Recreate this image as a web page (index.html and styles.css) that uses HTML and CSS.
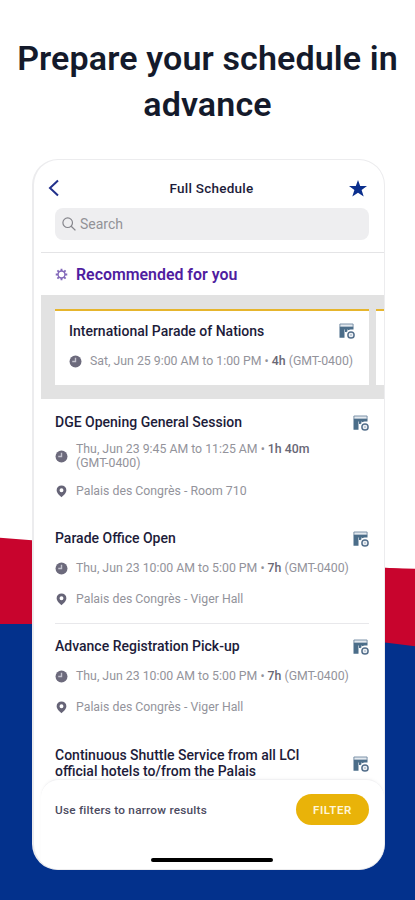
FILE: index.html
```html
<!DOCTYPE html>
<html lang="en">
<head>
<meta charset="utf-8">
<title>Full Schedule</title>
<link rel="stylesheet" href="styles.css">
</head>
<body>
<svg width="0" height="0" class="defs" aria-hidden="true">
  <symbol id="clock" viewBox="0 0 12 12"><circle cx="6" cy="6" r="5.500" fill="#6c6a7c"/><path d="M6 2.600V6H3" fill="none" stroke="#c4c4cf" stroke-width="1.300"/></symbol>
  <symbol id="pin" viewBox="0 0 12 12"><path fill="#666477" fill-rule="evenodd" d="M6 .4a4.500 4.500 0 0 0-4.500 4.500C1.500 8 6 11.200 6 11.200S10.500 8 10.500 4.900A4.500 4.500 0 0 0 6 .4zm0 2.700a1.800 1.800 0 1 1 0 3.600 1.800 1.800 0 0 1 0-3.600z"/></symbol>
  <symbol id="add" viewBox="0 0 16 16"><path d="M.9 1h13.200v3H.9z" fill="#e3e9ef" stroke="#7189a0" stroke-width=".9"/><path d="M.5 4H14.500v2.500h-3a5 5 0 0 0-4.300 3V9H5.500v5.700H.5z" fill="#4b6d89"/><path d="M5.500 6.500v3M8.500 6.500v2" stroke="#b5c4d2" stroke-width=".9"/><circle cx="12" cy="12" r="3.100" fill="#f8fafc" stroke="#546f8b" stroke-width="1.500"/><path d="M12 10.700v2.600M10.700 12h2.600" stroke="#a9b7c6" stroke-width=".8"/></symbol>
</svg>
<main class="page">
  <svg class="backdrop" viewBox="0 0 415 900"><path fill="#c8042d" d="M0 537.800 415 570v80H0z"/><path fill="#c8042d" d="M300 568h85l30 .8V660H300z"/><path fill="#fff" d="M32 530h353v38H32z"/><path fill="#03318c" d="M0 624h200l185 18.500 30 3.800V900H0z"/></svg>
  <h1>Prepare your schedule in<br>advance</h1>
  <section class="phone">
    <header class="bar">
      <svg class="back" viewBox="0 0 12 18"><path d="M10 1.500 2 9l8 7.500" fill="none" stroke="#22318b" stroke-width="2"/></svg>
      <h2>Full Schedule</h2>
      <svg class="star" viewBox="0 0 18 17"><path fill="#0b2f8d" d="m9 0 2.200 6H18l-5.400 4 2.100 6.600L9 12.700l-5.700 3.900L5.400 10 0 6h6.800z"/></svg>
    </header>
    <div class="search">
      <svg viewBox="0 0 14 14"><circle cx="5.700" cy="5.700" r="4.800" fill="none" stroke="#85858b" stroke-width="1.200"/><path d="m9.200 9.200 4.200 4.200" stroke="#85858b" stroke-width="1.300"/></svg>
      <span>Search</span>
    </div>
    <div class="rec">
      <svg viewBox="0 0 14 14"><g fill="none" stroke="#8268b9"><circle cx="7" cy="7" r="3.700" stroke-width="1.500"/><path stroke-width="2" d="M7 .8v2.400M7 10.800v2.400M.8 7h2.400M10.800 7h2.400M2.600 2.600l1.800 1.800M9.600 9.600l1.800 1.800M2.600 11.400l1.800-1.800M9.600 4.400l1.800-1.800"/></g></svg>
      <h3>Recommended for you</h3>
    </div>
    <div class="rail">
      <article class="card">
        <div class="head"><h4>International Parade of Nations</h4><svg class="add"><use href="#add"/></svg></div>
        <div class="meta"><svg><use href="#clock"/></svg><p>Sat, Jun 25 9:00 AM to 1:00 PM • <b>4h</b> (GMT-0400)</p></div>
      </article>
      <article class="card"></article>
    </div>
    <div class="list">
      <article class="item first">
        <div class="head"><h4>DGE Opening General Session</h4><svg class="add"><use href="#add"/></svg></div>
        <div class="meta two"><svg><use href="#clock"/></svg><p>Thu, Jun 23 9:45 AM to 11:25 AM • <b>1h 40m</b><br>(GMT-0400)</p></div>
        <div class="meta place"><svg><use href="#pin"/></svg><p>Palais des Congrès - Room 710</p></div>
      </article>
      <article class="item ruled">
        <div class="head"><h4>Parade Office Open</h4><svg class="add"><use href="#add"/></svg></div>
        <div class="meta"><svg><use href="#clock"/></svg><p>Thu, Jun 23 10:00 AM to 5:00 PM • <b>7h</b> (GMT-0400)</p></div>
        <div class="meta place"><svg><use href="#pin"/></svg><p>Palais des Congrès - Viger Hall</p></div>
      </article>
      <article class="item">
        <div class="head"><h4>Advance Registration Pick-up</h4><svg class="add"><use href="#add"/></svg></div>
        <div class="meta"><svg><use href="#clock"/></svg><p>Thu, Jun 23 10:00 AM to 5:00 PM • <b>7h</b> (GMT-0400)</p></div>
        <div class="meta place"><svg><use href="#pin"/></svg><p>Palais des Congrès - Viger Hall</p></div>
      </article>
      <article class="item">
        <div class="head tall"><h4>Continuous Shuttle Service from all LCI<br>official hotels to/from the Palais</h4><svg class="add"><use href="#add"/></svg></div>
      </article>
    </div>
    <footer class="sheet">
      <div class="filters"><p>Use filters to narrow results</p><button>FILTER</button></div>
      <div class="home"></div>
    </footer>
  </section>
</main>
</body>
</html>
```
FILE: styles.css
```css
* { box-sizing: border-box; margin: 0; padding: 0; }
body { font-family: Roboto, "Liberation Sans", sans-serif; background: #fff; }
svg { display: block; flex: none; }
.defs { position: absolute; }
.page { width: 415px; height: 900px; overflow: hidden; position: relative; isolation: isolate; }
.backdrop { position: absolute; inset: 0; width: 415px; height: 900px; z-index: -1; }
h1 { height: 159px; padding-top: 35px; text-align: center; font-size: 34px; line-height: 46px; font-weight: 600; color: #141a2b; white-space: nowrap; letter-spacing: .13px; }
.phone { width: 353px; height: 711px; margin-left: 32px; background: #fff; border: 1px solid #ececee; border-left-width: 2px; border-radius: 26px; overflow: hidden; display: flex; flex-direction: column; color: #1d1c3a; }
.bar { height: 48px; padding: 8px 17px 0 14px; display: flex; align-items: center; justify-content: space-between; flex: none; }
.back { width: 12px; height: 18px; }
.star { width: 18px; height: 17px; }
h2 { font-size: 13.500px; font-weight: 500; letter-spacing: .25px; white-space: nowrap; padding-left: 14px; }
.search { height: 32px; width: 314px; margin-left: 21px; border-radius: 8px; background: #eeeef0; display: flex; align-items: center; gap: 4px; padding-left: 7px; font-size: 14px; color: #929297; flex: none; }
.search svg { width: 14px; height: 14px; }
.rec { margin: 12px 0 0 7px; height: 43px; border-top: 1px solid #e4e4e6; display: flex; align-items: center; gap: 8px; padding-left: 14px; flex: none; }
.rec svg { width: 13px; height: 13px; }
h3 { font-size: 15.900px; font-weight: 600; color: #4f1da0; white-space: nowrap; }
.rail { margin-left: 7px; height: 104px; background: #e2e2e2; padding: 14px 0 14px 14px; display: flex; gap: 7px; overflow: hidden; flex: none; }
.card { width: 314px; flex: none; background: #fff; border-top: 2px solid #e6b52d; padding: 9px 14px 0; }
.card .meta { margin-top: 12px; }
.head { display: flex; height: 22px; align-items: center; justify-content: space-between; }
h4 { font-size: 14px; line-height: 16px; font-weight: 500; white-space: nowrap; }
.add { width: 16px; height: 16px; }
.item .add { margin-top: 2px; }
.meta { display: flex; align-items: center; gap: 8px; height: 14px; margin-top: 12px; font-size: 12.300px; line-height: 14px; color: #93939b; white-space: nowrap; }
.meta svg { width: 13px; height: 13px; }
.meta b { font-weight: 500; color: #686775; }
.list { padding: 12px 15px 0 21px; flex: 1; min-height: 0; }
.item { height: 108px; }
.first { height: 116px; }
.ruled { border-bottom: 1px solid #e8e8eb; height: 97px; margin-bottom: 11px; }
.two { height: 28px; margin-top: 9px; }
.place { margin-top: 17px; }
.two + .place { margin-top: 14px; }
.tall { height: 39px; }
.item .tall .add { margin-top: 3px; }
.sheet { height: 90px; margin-left: 7px; border-top: 1px solid #f1f1f3; border-radius: 18px 18px 0 0; background: #fff; box-shadow: 0 -1px 3px #00000008; flex: none; position: relative; }
.filters { display: flex; justify-content: space-between; align-items: center; padding: 14px 15px 0 14px; }
.filters p { font-size: 11.800px; font-weight: 500; letter-spacing: .22px; color: #4c4b5f; white-space: nowrap; }
button { width: 73px; height: 31px; border: 0; border-radius: 16px; background: #e9b309; color: #fff6d8; font: 600 11.500px Roboto, sans-serif; letter-spacing: .6px; }
.home { width: 122px; height: 4px; border-radius: 2px; background: #000; margin: 33px 0 0 110px; }
```
